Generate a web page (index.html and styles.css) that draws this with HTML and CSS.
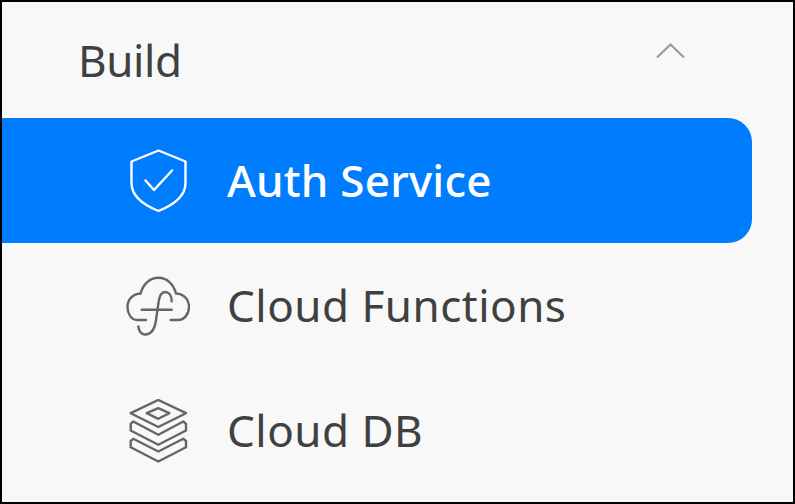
FILE: index.html
```html
<!DOCTYPE html>
<html lang="en">
<head>
    <meta charset="UTF-8">
    <title>Build menu</title>
    <link rel="stylesheet" href="styles.css">
</head>
<body>

<div class="sidebar">
    <div class="group">
        <span>Build</span>
        <svg class="chevron" width="32" height="18" viewBox="0 0 32 18" fill="none">
            <path d="M2 15.500 L15.500 2.500 L29 15.500" stroke="#999" stroke-width="2"/>
        </svg>
    </div>

    <div class="item active">
        <svg class="icon" width="64" height="64" viewBox="0 0 64 64" fill="none">
            <path d="M32.500 1.500 L59.500 12.500 V34 C59.500 48 45 57 32.500 62 C20 57 5.500 48 5.500 34 V12.500 Z" stroke="#fff" stroke-width="2.400" stroke-linejoin="round"/>
            <path d="M19.500 31.500 L28 41 L46 21.500" stroke="#fff" stroke-width="2.400" stroke-linecap="round" stroke-linejoin="round"/>
        </svg>
        <span>Auth Service</span>
    </div>

    <div class="item">
        <svg class="icon" width="64" height="64" viewBox="0 0 64 64" fill="none">
            <path d="M20 46 H11 C5.500 46 1.500 40 1.500 33 C1.500 25.500 6.500 20 14.700 19.500 C17 10 24 3.800 32.300 3.800 C41 3.800 47.500 10 50 19.500 C58 20 63 25.500 63 33 C63 40 58 46 52.500 46 H44.700" stroke="#666" stroke-width="2.400" stroke-linecap="round" stroke-linejoin="round"/>
            <path d="M15.700 35.800 H45.700" stroke="#666" stroke-width="2.400" stroke-linecap="round"/>
            <path d="M45.700 27.200 C45.700 21 42.500 18 39 18 C34.500 18 33 23 32.300 30 L30 46 C28.800 55 25 60.500 19 60.500 C15 60.500 12.800 56.500 12.300 52.500" stroke="#666" stroke-width="2.400" stroke-linecap="round"/>
        </svg>
        <span>Cloud Functions</span>
    </div>

    <div class="item">
        <svg class="icon" width="64" height="64" viewBox="0 0 64 64" fill="none">
            <path d="M32.300 1 L60 14.200 L32.300 28 L4.700 14.200 Z" stroke="#666" stroke-width="2.400" stroke-linejoin="round"/>
            <path d="M32.300 9.200 L43.300 14.200 L32.300 19.800 L20.700 14.200 Z" stroke="#666" stroke-width="2.400" stroke-linejoin="round"/>
            <path d="M7.300 22.500 L32.300 35.800 L57.300 22.500 L60 24.800 V31.500 L32.300 45.800 L4.700 31.500 V24.800 Z" stroke="#666" stroke-width="2.400" stroke-linejoin="round"/>
            <path d="M7.300 39.800 L32.300 52.500 L57.300 39.800 L60 42 V48.200 L32.300 62.500 L4.700 48.200 V42 Z" stroke="#666" stroke-width="2.400" stroke-linejoin="round"/>
        </svg>
        <span>Cloud DB</span>
    </div>
</div>

</body>
</html>
```

FILE: styles.css
```css
* {
    box-sizing: border-box;
    margin: 0;
    padding: 0;
}
html, body {
    height: 100%;
    overflow: hidden;
}
body {
    font-family: "Noto Sans", sans-serif;
    background: #f8f8f8;
}
.sidebar {
    height: 504px;
    border: 2px solid #000;
    color: #404040;
    overflow: hidden;
}
.group {
    height: 116px;
    display: flex;
    align-items: center;
    justify-content: space-between;
    padding: 0 106px 0 76px;
    font-size: 44px;
    letter-spacing: -0.4px;
}
.chevron {
    margin-top: -18px;
}
.item {
    width: 750px;
    height: 125px;
    display: flex;
    align-items: center;
    gap: 37px;
    padding-left: 124px;
    font-size: 44px;
    letter-spacing: 0.5px;
}
.item span {
    margin-bottom: 2px;
}
.active {
    background: #007dff;
    color: #fff;
    font-weight: 500;
    letter-spacing: 0.2px;
    border-radius: 0 24px 24px 0;
}
.icon {
    flex: none;
}
```
